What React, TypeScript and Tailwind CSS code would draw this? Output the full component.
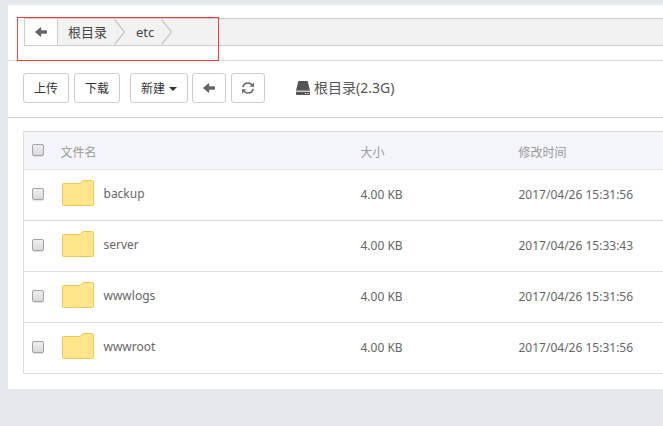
import type { ReactNode } from "react";

type FileItem = {
  name: string;
  size: string;
  modified: string;
};

const files: FileItem[] = [
  { name: "backup", size: "4.00 KB", modified: "2017/04/26 15:31:56" },
  { name: "server", size: "4.00 KB", modified: "2017/04/26 15:33:43" },
  { name: "wwwlogs", size: "4.00 KB", modified: "2017/04/26 15:31:56" },
  { name: "wwwroot", size: "4.00 KB", modified: "2017/04/26 15:31:56" },
];

const crumbs = ["根目录", "etc"];

const ArrowLeftIcon = () => (
  <svg className="w-3 h-3" viewBox="0 0 12 12" fill="currentColor" aria-hidden="true">
    <path d="M0 6 5.6 1.2 6.2 1.5V4.3H11.4Q12 4.3 12 4.9V7.1Q12 7.7 11.4 7.7H6.2V10.5L5.6 10.8Z" />
  </svg>
);

const RefreshIcon = () => (
  <svg className="w-3 h-3" viewBox="0 0 12 12" fill="none" stroke="currentColor" strokeWidth="1.6" aria-hidden="true">
    <path d="M.9 5.2C1.3 2.6 3.3 1 6 1 7.6 1 8.9 1.6 10 2.8" />
    <path d="M11.1 6.8C10.7 9.4 8.7 11 6 11 4.4 11 3.1 10.4 2 9.2" />
    <path d="M12 .6V4.8H7.8Z" fill="currentColor" stroke="none" />
    <path d="M0 11.4V7.2H4.2Z" fill="currentColor" stroke="none" />
  </svg>
);

const DiskIcon = () => (
  <svg className="w-3.5 h-3.5" viewBox="0 0 14 14" aria-hidden="true">
    <path d="M3 0H11Q11.6 0 11.8 .6L14 9.8H0L2.2 .6Q2.4 0 3 0Z" fill="#555" />
    <path d="M0 9.8H14V11H0Z" fill="#ccc" />
    <path d="M0 11H14V13.2Q14 14 13.2 14H.8Q0 14 0 13.2Z" fill="#555" />
    <path d="M9 12H10.2V13H9ZM11.4 12H12.6V13H11.4Z" fill="#fff" />
  </svg>
);

const FolderIcon = () => (
  <svg className="w-8 h-[26px]" viewBox="0 0 32 26" aria-hidden="true">
    <path
      d="M.5 4.5Q.5 3.5 1.5 3.5H18.3L20.2 1.1Q20.6 .5 21.4 .5H30.5Q31.5 .5 31.5 1.5V24.5Q31.5 25.5 30.5 25.5H1.5Q.5 25.5 .5 24.5Z"
      fill="#ffe68c"
      stroke="#efc65a"
    />
  </svg>
);

const CrumbArrow = () => (
  <svg className="w-3 h-[26px]" viewBox="0 0 12 26" fill="none" stroke="#c8c8d4" strokeWidth="1.4" aria-hidden="true">
    <path d="M.5 .5 10.5 13 .5 25.5" />
  </svg>
);

const Checkbox = ({ label }: { label: string }) => (
  <input
    type="checkbox"
    aria-label={label}
    className="block w-3 h-3 appearance-none rounded-[2px] border border-[#a3a3a3] bg-linear-to-b from-[#efefef] to-[#d9d9d9] shadow-[0_1px_0_#e4e4e4] checked:bg-gray-500"
  />
);

const ToolButton = ({
  children,
  label,
  className,
}: {
  children: ReactNode;
  label?: string;
  className: string;
}) => (
  <button
    type="button"
    aria-label={label}
    className={`flex h-[30px] items-center justify-center rounded-[3px] border border-[#ccc] bg-white text-xs ${className}`}
  >
    {children}
  </button>
);

const PathBar = () => (
  <div className="relative border-b border-[#ddd] pt-[13px] pb-3.5 pl-4">
    <nav className="flex h-7 border border-r-0 border-[#ccc] bg-[#f2f2f2] text-[13px] leading-[26px] text-[#444]">
      <button
        type="button"
        aria-label="返回"
        className="flex w-[33px] items-center justify-center border-r border-[#ccc] bg-white text-[#666]"
      >
        <ArrowLeftIcon />
      </button>
      {crumbs.map((crumb) => (
        <a key={crumb} href="#" className="flex pl-2.5">
          <span className="pr-[7px]">{crumb}</span>
          <CrumbArrow />
        </a>
      ))}
    </nav>
    <div className="pointer-events-none absolute top-3 -bottom-px left-[9px] w-[202px] border border-[#fb3b3b]" />
  </div>
);

const Toolbar = () => (
  <div className="flex items-center border-b border-[#ccc] pt-3 pb-3.5 pl-[15px] text-[#333]">
    <div className="flex gap-[5px]">
      <ToolButton className="w-[46px] pt-0.5">上传</ToolButton>
      <ToolButton className="w-[46px] pt-0.5">下载</ToolButton>
    </div>
    <div className="ml-2.5 flex gap-1">
      <ToolButton className="w-[58px] gap-1 pt-0.5">
        新建
        <span className="border-x-4 border-t-4 border-x-transparent border-t-[#333]" />
      </ToolButton>
      <ToolButton label="后退" className="w-[34px] text-[#666]">
        <ArrowLeftIcon />
      </ToolButton>
      <ToolButton label="刷新" className="ml-px w-[34px] text-[#666]">
        <RefreshIcon />
      </ToolButton>
    </div>
    <a href="#" className="ml-[31px] flex items-center gap-1 text-sm text-[#555]">
      <DiskIcon />
      根目录(2.3G)
    </a>
  </div>
);

const FileTable = () => (
  <table className="w-full table-fixed border-collapse border border-r-0 border-[#ddd] text-left text-xs text-[#666]">
    <colgroup>
      <col className="w-[29px]" />
      <col className="w-[300px]" />
      <col className="w-[158px]" />
      <col />
    </colgroup>
    <thead>
      <tr className="h-[38px] border-b border-[#dfe3e8] bg-[#f4f5fa] text-[#999]">
        <th className="pb-0.5 pl-2">
          <Checkbox label="全选" />
        </th>
        <th className="pt-1 pl-2 font-normal">文件名</th>
        <th className="pt-1 pl-2 font-normal">大小</th>
        <th className="pt-1 pl-2 font-normal">修改时间</th>
      </tr>
    </thead>
    <tbody>
      {files.map((file) => (
        <tr key={file.name} className="h-[51px] border-b border-[#ddd]">
          <td className="pb-0.5 pl-2">
            <Checkbox label={file.name} />
          </td>
          <td className="pl-2">
            <a href="#" className="flex items-center gap-2.5 pb-1 pl-px">
              <FolderIcon />
              <span className="pt-0.5">{file.name}</span>
            </a>
          </td>
          <td className="pl-2">{file.size}</td>
          <td className="pl-2">{file.modified}</td>
        </tr>
      ))}
    </tbody>
  </table>
);

const App = () => {
  return (
    <div className="min-h-screen overflow-hidden bg-[#e5e9ee] pt-[5px] pl-2 font-['Noto_Sans','Noto_Sans_CJK_SC',sans-serif]">
      <main className="bg-white pb-[15px]">
        <PathBar />
        <Toolbar />
        <div className="pt-[13px] pl-[15px]">
          <FileTable />
        </div>
      </main>
    </div>
  );
};

export default App;
